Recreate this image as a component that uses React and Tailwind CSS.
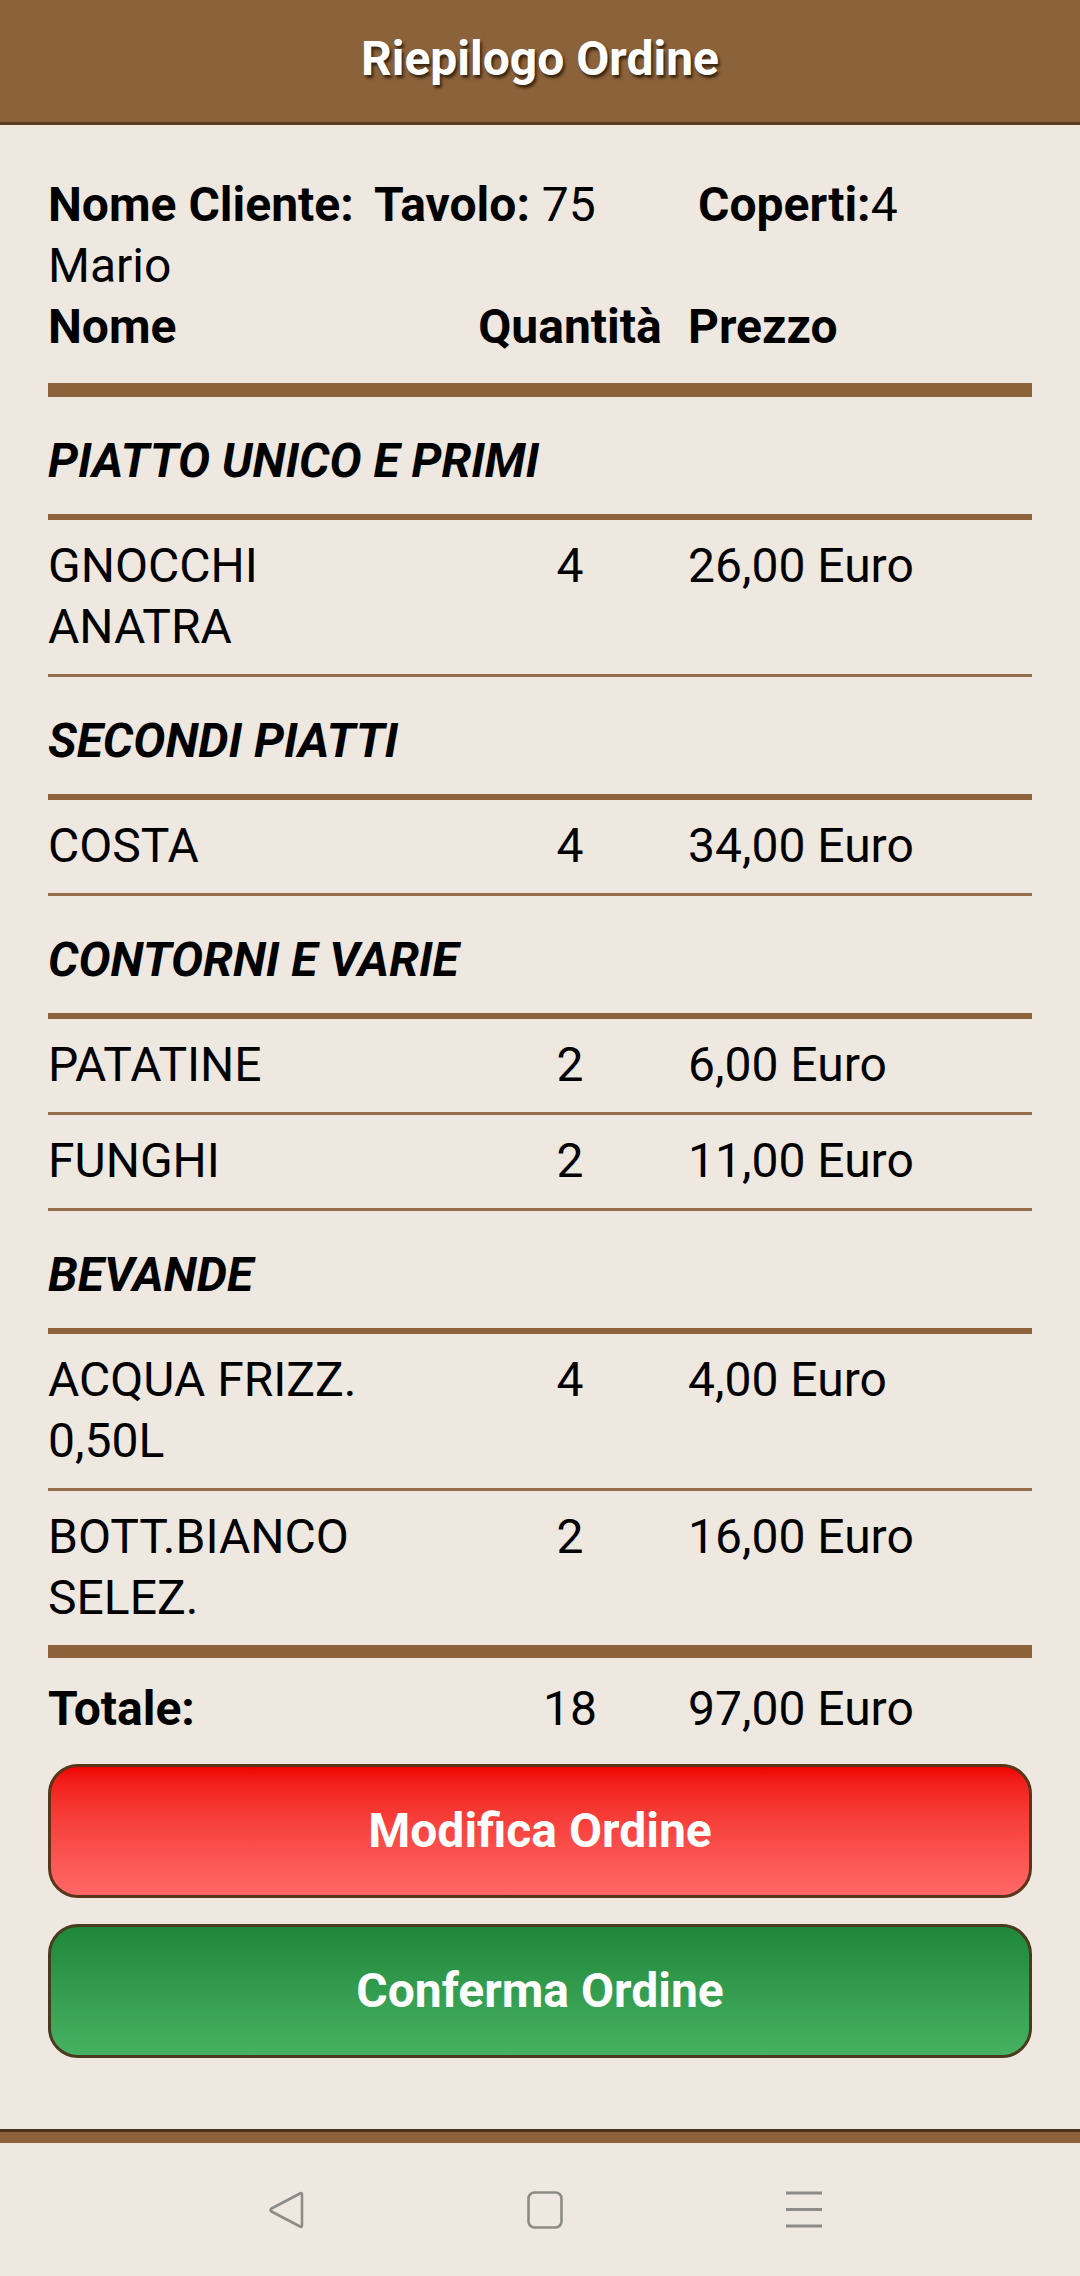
import React from "react";

const BROWN = "bg-[#8B623A]";

function Bar({ h }) {
  return <div className={`${h} w-full bg-[#8B623A]`} />;
}

function Category({ title }) {
  return (
    <div className="pt-[33px] pb-[23px] font-bold italic leading-[61px]">{title}</div>
  );
}

function Item({ name, qty, price }) {
  return (
    <div className="flex pt-[15px] pb-[17px] leading-[61px]">
      <div className="w-[427px] pr-[50px] shrink-0">{name}</div>
      <div className="w-[190px] shrink-0 text-center">{qty}</div>
      <div className="ml-[23px] whitespace-nowrap">{price}</div>
    </div>
  );
}

const sections = [
  {
    title: "PIATTO UNICO E PRIMI",
    items: [{ name: "GNOCCHI ANATRA", qty: "4", price: "26,00 Euro" }],
  },
  {
    title: "SECONDI PIATTI",
    items: [{ name: "COSTA", qty: "4", price: "34,00 Euro" }],
  },
  {
    title: "CONTORNI E VARIE",
    items: [
      { name: "PATATINE", qty: "2", price: "6,00 Euro" },
      { name: "FUNGHI", qty: "2", price: "11,00 Euro" },
    ],
  },
  {
    title: "BEVANDE",
    items: [
      { name: "ACQUA FRIZZ. 0,50L", qty: "4", price: "4,00 Euro" },
      { name: "BOTT.BIANCO SELEZ.", qty: "2", price: "16,00 Euro" },
    ],
  },
];

export default function App() {
  return (
    <div className="w-[1080px] h-[2276px] bg-[#EFE8E1] flex flex-col font-['Roboto','Noto_Sans',sans-serif] text-black text-[48px]">
      <header className={`h-[125px] shrink-0 ${BROWN} border-b-[3px] border-[#5B3E22] flex items-center justify-center pb-[5px]`}>
        <h1 className="text-[48px] font-bold text-white leading-none [text-shadow:2px_3px_3px_rgba(30,15,0,0.75)]">
          Riepilogo Ordine
        </h1>
      </header>

      <main className="flex-1 px-[48px] pt-[49px]">
        <div className="flex leading-[61px]">
          <div className="w-[326px] shrink-0">
            <span className="font-bold">Nome Cliente:</span> Mario
          </div>
          <div className="w-[324px] shrink-0 whitespace-nowrap">
            <span className="font-bold">Tavolo:</span> 75
          </div>
          <div className="whitespace-nowrap">
            <span className="font-bold">Coperti:</span>4
          </div>
        </div>
        <div className="flex font-bold leading-[61px] pb-[26px]">
          <div className="w-[427px] shrink-0">Nome</div>
          <div className="w-[190px] shrink-0 text-center">Quantità</div>
          <div className="ml-[23px]">Prezzo</div>
        </div>
        <Bar h="h-[14px]" />

        {sections.map((s, si) => (
          <div key={s.title}>
            <Category title={s.title} />
            <Bar h="h-[6px]" />
            {s.items.map((it, ii) => (
              <div key={it.name}>
                <Item {...it} />
                {!(si === sections.length - 1 && ii === s.items.length - 1) && (
                  <div className="h-[3px] w-full bg-[#93704B]" />
                )}
              </div>
            ))}
          </div>
        ))}

        <Bar h="h-[13px]" />
        <div className="flex pt-[20px] pb-[2px] leading-[61px]">
          <div className="w-[427px] shrink-0 font-bold">Totale:</div>
          <div className="w-[190px] shrink-0 text-center">18</div>
          <div className="ml-[23px]">97,00 Euro</div>
        </div>

        <div className="mt-[23px] flex flex-col gap-[26px]">
          <button className="h-[134px] w-full rounded-[30px] border-[3px] border-[#5A3519] bg-linear-to-b from-[#F00000] to-[#FF6767] text-white font-bold text-[48px] flex items-center justify-center">
            Modifica Ordine
          </button>
          <button className="h-[134px] w-full rounded-[30px] border-[3px] border-[#4A3A1E] bg-linear-to-b from-[#1E873A] to-[#47B263] text-white font-bold text-[48px] flex items-center justify-center">
            Conferma Ordine
          </button>
        </div>
      </main>

      <div className={`h-[14px] shrink-0 ${BROWN} border-t-[3px] border-[#4A321C]`} />

      <nav className="h-[133px] shrink-0 flex items-center pl-[266px] gap-[219px]">
        <div className="w-[40px] h-[40px] flex items-center justify-center">
          <svg width="40" height="40" viewBox="0 0 40 40">
            <path
              d="M36 4.5 L36 35.5 Q36 37.5 34 36.5 L5.5 21.5 Q3.5 20 5.5 18.5 L34 3.5 Q36 2.5 36 4.5 Z"
              fill="none"
              stroke="#8E8A85"
              strokeWidth="2.6"
              strokeLinejoin="round"
            />
          </svg>
        </div>
        <div className="w-[40px] h-[40px] flex items-center justify-center">
          <svg width="40" height="40" viewBox="0 0 40 40">
            <rect x="3.5" y="2.5" width="33" height="35" rx="6" fill="none" stroke="#8E8A85" strokeWidth="2.6" />
          </svg>
        </div>
        <div className="w-[40px] h-[40px] flex items-center justify-center">
          <svg width="40" height="40" viewBox="0 0 40 40">
            <path d="M2 3 H38 M2 19.5 H38 M2 36 H38" stroke="#8E8A85" strokeWidth="3" />
          </svg>
        </div>
      </nav>
    </div>
  );
}
